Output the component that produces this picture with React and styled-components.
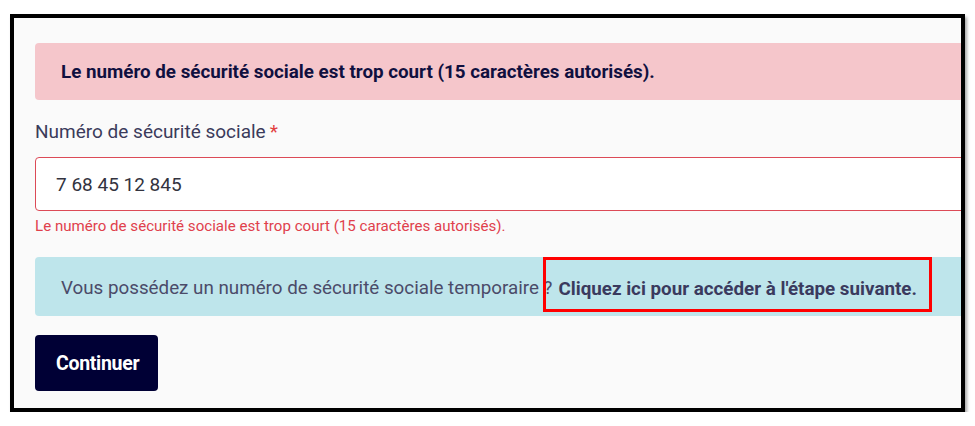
import React from "react";
import styled, { createGlobalStyle } from "styled-components";

const Global = createGlobalStyle`
  html, body { margin: 0; padding: 0; background: #ffffff; }
  body { font-family: Roboto, "Liberation Sans", sans-serif; }
`;

const Frame = styled.div`
  margin: 14px 0 0 10px;
  width: 947px;
  height: 390px;
  border: 4px solid #000;
  background: #fafafa;
  overflow: hidden;
  box-shadow: 2px 3px 3px rgba(0, 0, 0, 0.35);
`;

const Content = styled.div`
  width: 1000px;
  padding: 25px 0 0 21px;
  display: flex;
  flex-direction: column;
  box-sizing: border-box;
`;

const Alert = styled.div`
  height: 57px;
  display: flex;
  align-items: center;
  padding: 0 0 0 26px;
  border-radius: 4px;
  background: ${(p) => (p.$tone === "info" ? "#bee5eb" : "#f5c6cb")};
  color: ${(p) => (p.$tone === "info" ? "#4b4b69" : "#10103f")};
  font-size: 18.8px;
  font-weight: ${(p) => (p.$tone === "info" ? 400 : 700)};
  box-sizing: border-box;
`;

const InfoAlert = styled(Alert)`
  height: 59px;
  margin-top: 22px;
  padding-top: 2px;
`;

const Label = styled.label`
  margin-top: 20px;
  font-size: 19px;
  color: #3b3b5b;
  line-height: 23px;
`;

const Star = styled.span`
  color: #e2403e;
  margin-left: 4px;
`;

const Input = styled.div`
  margin-top: 14px;
  height: 54px;
  border: 1px solid #dc4a57;
  border-radius: 4px;
  background: #ffffff;
  display: flex;
  align-items: center;
  padding-left: 20px;
  font-size: 19px;
  color: #33333f;
  box-sizing: border-box;
`;

const ErrorText = styled.div`
  margin-top: 6px;
  font-size: 15.1px;
  line-height: 18px;
  color: #e0404c;
`;

const Link = styled.span`
  position: relative;
  margin-left: 6px;
  font-size: 18.8px;
  font-weight: 700;
  color: #3a3a5e;
  padding-top: 3px;

  &::after {
    content: "";
    position: absolute;
    left: -15px;
    right: -15px;
    top: -18px;
    bottom: -12px;
    border: 3px solid #ff0000;
  }
`;

const Button = styled.button`
  margin-top: 19px;
  width: 123px;
  height: 56px;
  border: none;
  border-radius: 4px;
  background: #000035;
  color: #ffffff;
  font-family: Roboto, "Liberation Sans", sans-serif;
  font-size: 19.5px;
  font-weight: 700;
  text-align: left;
  padding-left: 21px;
  letter-spacing: -0.3px;
`;

export default function App() {
  return (
    <>
      <Global />
      <Frame>
        <Content>
          <Alert $tone="danger">
            Le numéro de sécurité sociale est trop court (15 caractères autorisés).
          </Alert>
          <Label>
            Numéro de sécurité sociale<Star>*</Star>
          </Label>
          <Input>7 68 45 12 845</Input>
          <ErrorText>
            Le numéro de sécurité sociale est trop court (15 caractères autorisés).
          </ErrorText>
          <InfoAlert $tone="info">
            Vous possédez un numéro de sécurité sociale temporaire ?
            <Link>Cliquez ici pour accéder à l'étape suivante.</Link>
          </InfoAlert>
          <div>
            <Button>Continuer</Button>
          </div>
        </Content>
      </Frame>
    </>
  );
}
